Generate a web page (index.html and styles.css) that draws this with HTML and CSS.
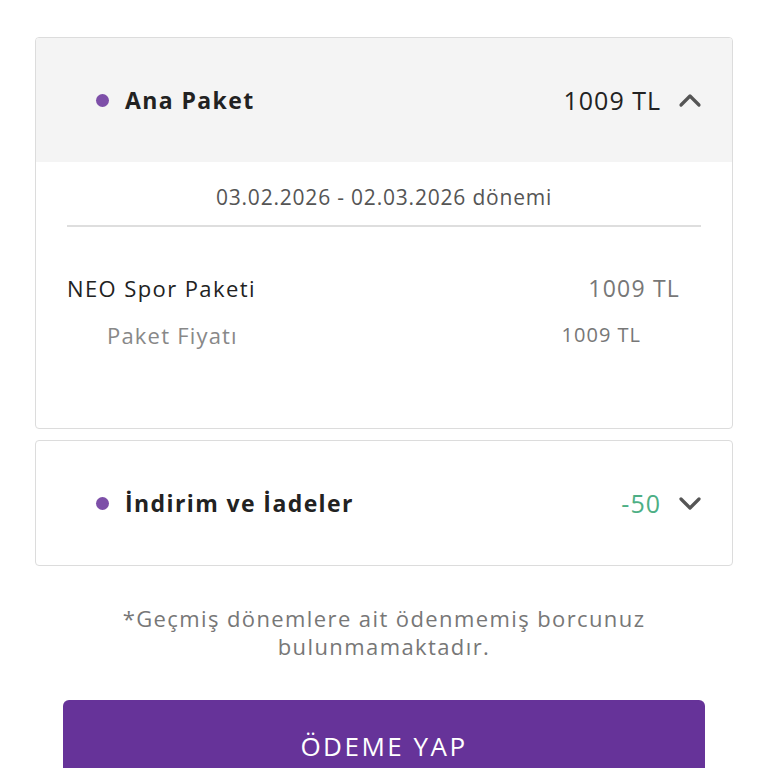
FILE: index.html
```html
<!DOCTYPE html>
<html lang="tr">
<head>
  <meta charset="UTF-8">
  <title>Fatura Detayı</title>
  <link rel="stylesheet" href="styles.css">
</head>
<body>

  <div class="page">
    <!-- Ana paket -->
    <div class="card">
      <div class="card-head gray">
        <span class="dot"></span>
        <span class="title">Ana Paket</span>
        <span class="amount">1009 TL</span>
        <svg class="chev" width="24" height="16" viewBox="0 0 24 16">
          <path d="M3 13 L12 4 L21 13" fill="none" stroke="#555" stroke-width="3.2" stroke-linecap="round" stroke-linejoin="round"/>
        </svg>
      </div>
      <div class="card-body">
        <div class="period">03.02.2026 - 02.03.2026 dönemi</div>
        <div class="row main">
          <span>NEO Spor Paketi</span>
          <span class="val">1009 TL</span>
        </div>
        <div class="row sub">
          <span>Paket Fiyatı</span>
          <span class="val">1009 TL</span>
        </div>
      </div>
    </div>

    <!-- İndirimler -->
    <div class="card">
      <div class="card-head">
        <span class="dot"></span>
        <span class="title">İndirim ve İadeler</span>
        <span class="amount green">-50</span>
        <svg class="chev" width="24" height="16" viewBox="0 0 24 16">
          <path d="M3 4 L12 13 L21 4" fill="none" stroke="#555" stroke-width="3.2" stroke-linecap="round" stroke-linejoin="round"/>
        </svg>
      </div>
    </div>

    <p class="note">*Geçmiş dönemlere ait ödenmemiş borcunuz<br>bulunmamaktadır.</p>

    <button class="pay">ÖDEME YAP</button>
  </div>

</body>
</html>
```

FILE: styles.css
```css
body {
  margin: 0;
  padding: 0;
  background: #fff;
  font-family: 'Open Sans', Lato, sans-serif;
  color: #222;
  overflow: hidden;
}

.page {
  padding: 37px 35px 0;
}

.card {
  border: 1.5px solid #dcdcdc;
  border-radius: 4px;
  overflow: hidden;
  margin-bottom: 11px;
}

.card-head {
  height: 124px;
  display: flex;
  align-items: center;
  padding: 0 30px 0 60px;
}

.card-head.gray {
  background: #f4f4f4;
}

.dot {
  width: 13px;
  height: 13px;
  border-radius: 50%;
  background: #7d4fa8;
  margin-right: 16px;
}

.title {
  font-size: 23px;
  font-weight: 700;
  color: #222;
  flex: 1;
  letter-spacing: 1.4px;
}

.amount {
  font-size: 25px;
  color: #222;
  margin-right: 17px;
  letter-spacing: 1px;
}

.amount.green {
  color: #4daf85;
}

.card-body {
  padding: 0 31px 79px;
}

.period {
  text-align: center;
  font-size: 21px;
  color: #555;
  padding: 22px 0 15px;
  line-height: 26px;
  letter-spacing: 0.8px;
  border-bottom: 2px solid #dedede;
}

.row {
  display: flex;
  justify-content: space-between;
  align-items: center;
}

.row.main {
  font-size: 22px;
  color: #222;
  margin-top: 47px;
  padding-right: 21px;
  line-height: 28px;
  letter-spacing: 1.4px;
}

.row.main .val {
  font-size: 23px;
  color: #777;
  letter-spacing: 1.2px;
}

.row.sub {
  font-size: 22px;
  color: #888;
  margin-top: 19px;
  padding: 0 60px 0 40px;
  line-height: 28px;
  letter-spacing: 1.2px;
}

.row.sub .val {
  font-size: 20px;
  color: #777;
  letter-spacing: 1px;
}

.note {
  text-align: center;
  font-size: 22px;
  line-height: 28px;
  color: #777;
  margin: 38px 0 0;
  letter-spacing: 1.4px;
}

.pay {
  display: block;
  width: calc(100% - 56px);
  margin: 40px 28px 0;
  height: 92px;
  border: none;
  border-radius: 6px;
  background: #663399;
  color: #fff;
  font-family: 'Open Sans', Lato, sans-serif;
  font-size: 26px;
  letter-spacing: 2.5px;
}
```
